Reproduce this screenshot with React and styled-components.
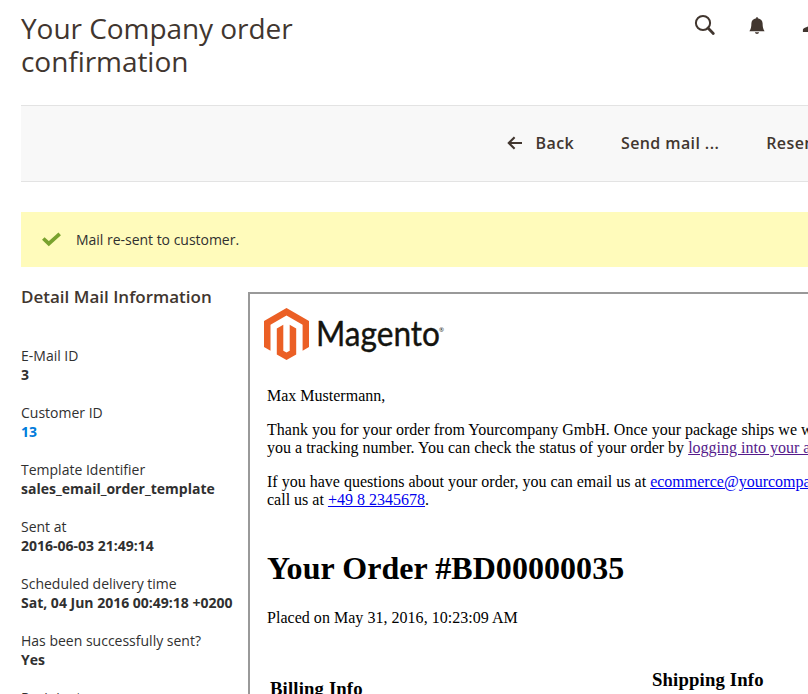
import React from "react";
import styled, { createGlobalStyle } from "styled-components";

const GlobalStyle = createGlobalStyle`
  html, body { margin: 0; background: #fff; }
  body { overflow: hidden; }
  * { box-sizing: border-box; }
`;

const Page = styled.div`
  width: 808px;
  height: 694px;
  overflow: hidden;
  padding-left: 21px;
  display: flex;
  flex-direction: column;
  color: #303030;
  font: 400 14px/19px "Open Sans", "Noto Sans", sans-serif;
  white-space: nowrap;
`;

const Header = styled.header`
  flex: none;
  height: 105px;
  display: flex;
  justify-content: space-between;
  color: #41362f;
`;

const Title = styled.h1`
  margin: 0;
  padding-top: 12px;
  width: 300px;
  font-size: 28px;
  font-weight: 400;
  line-height: 33px;
  letter-spacing: -0.05px;
`;

const HeaderIcons = styled.div`
  flex: none;
  width: 115px;
  padding-top: 14px;
  display: flex;
  gap: 30px;
  svg { flex: none; display: block; }
`;

const Toolbar = styled.div`
  flex: none;
  height: 77px;
  display: flex;
  align-items: center;
  padding: 0 0 2px 486px;
  background: #f8f8f8;
  border-top: 1px solid #e3e3e3;
  border-bottom: 1px solid #e3e3e3;
`;

const ToolbarButton = styled.button`
  flex: none;
  display: flex;
  align-items: center;
  gap: 12.6px;
  margin: 0 ${(p) => p.$after || 0}px 0 0;
  padding: 0;
  border: 0;
  background: none;
  color: #41362f;
  font: 600 16px/22px "Open Sans", sans-serif;
  letter-spacing: 0.4px;
`;

const Message = styled.div`
  flex: none;
  height: 55px;
  margin-top: 30px;
  padding-left: 21px;
  display: flex;
  align-items: center;
  gap: 15px;
  background: #fffbbb;
  letter-spacing: -0.02px;
`;

const Content = styled.main`
  flex: 1;
  min-height: 0;
  display: grid;
  grid-template-columns: 227px 900px;
`;

const Details = styled.aside`
  padding-top: 18px;
`;

const DetailsTitle = styled.h2`
  margin: 0 0 38px;
  color: #41362f;
  font-size: 17px;
  font-weight: 600;
  line-height: 23px;
`;

const DetailList = styled.dl`
  margin: 0;
  display: flex;
  flex-direction: column;
  gap: 19px;
`;

const Term = styled.dt`
  margin: 0;
`;

const Value = styled.dd`
  margin: 0;
  font-weight: 700;
`;

const ValueLink = styled.a`
  color: #007bdb;
`;

const MailFrame = styled.section`
  margin-top: 25px;
  height: 500px;
  border: 2px solid #999;
  padding: 13px 0 0 17px;
  color: #000;
  font: 16px/18px "Liberation Serif", serif;
`;

const LogoImage = styled.svg`
  display: block;
  margin-left: -3px;
`;

const Paragraph = styled.p`
  margin: 0 0 16px;
  letter-spacing: 0.005px;
`;

const Greeting = styled(Paragraph)`
  margin-top: 26px;
`;

const MailLink = styled.a`
  color: ${(p) => (p.$visited ? "#551a8b" : "#0000ee")};
  text-decoration: underline;
`;

const OrderTitle = styled.h1`
  margin: 41px 0 23px;
  font-size: 32px;
  line-height: 36px;
  letter-spacing: 0.05px;
`;

const OrderDate = styled(Paragraph)`
  letter-spacing: 0.03px;
`;

const Addresses = styled.div`
  display: grid;
  grid-template-columns: 382px 300px;
  padding: 26px 0 0 3px;
`;

const AddressTitle = styled.h3`
  margin: ${(p) => p.$drop || 0}px 0 0;
  font-size: 18.72px;
  line-height: 21px;
  letter-spacing: 0.15px;
`;

const details = [
  ["E-Mail ID", "3"],
  ["Customer ID", "13", true],
  ["Template Identifier", "sales_email_order_template"],
  ["Sent at", "2016-06-03 21:49:14"],
  ["Scheduled delivery time", "Sat, 04 Jun 2016 00:49:18 +0200"],
  ["Has been successfully sent?", "Yes"],
  ["Recipient", "max@example.com"],
];

const SearchIcon = () => (
  <svg width="24" height="24" viewBox="0 0 24 24" fill="none" stroke="#41362f">
    <circle cx="10" cy="9" r="7.1" strokeWidth="2" />
    <path d="M15 14 20.3 19.4" strokeWidth="2.8" strokeLinecap="round" />
  </svg>
);

const BellIcon = () => (
  <svg width="20" height="24" viewBox="0 0 20 24" fill="#41362f">
    <path d="M9.2 3.2h1.6v1c3.1.5 4.7 2.5 4.8 5.1.1 3.8.4 5.6 2 7.9H2.4c1.6-2.3 1.9-4.1 2-7.9.1-2.6 1.7-4.6 4.8-5.1zM7.9 18.3h4.2c-.3 1.2-1 1.7-2.1 1.7s-1.8-.5-2.1-1.7z" />
  </svg>
);

const UserIcon = () => (
  <svg width="24" height="24" viewBox="0 0 24 24" fill="#41362f">
    <ellipse cx="16" cy="8" rx="4.5" ry="5.5" />
    <path d="M5.9 18v-2c0-1.2.6-1.8 2-2.3l4-1.6h8l4 1.6V18z" />
  </svg>
);

const BackIcon = () => (
  <svg width="16" height="14" viewBox="0 0 16 14" fill="none" stroke="#41362f" strokeWidth="2.1">
    <path d="M15 7H2M7.6 1.3 1.8 7l5.8 5.7" />
  </svg>
);

const CheckIcon = () => (
  <svg width="19" height="15" viewBox="0 0 19 15" fill="none" stroke="#79a22e" strokeWidth="3.7">
    <path d="m1.3 6.5 5.5 5.2L17.7 1.8" />
  </svg>
);

const MagentoLogo = () => (
  <LogoImage width="190" height="54" viewBox="0 0 190 54">
    <g fill="#eb5f25">
      <path d="M22.5 1 45 14v26L38.6 43.7V17.7L22.5 8.5 6.5 17.7v26L0 40V14z" />
      <path d="m12.8 21.4 6.5-3.7v26l3.2 1.9 3.2-1.9v-26l6.5 3.7v26L22.5 53l-9.7-5.6z" />
    </g>
    <text x="52" y="38.8" fill="#14140f" stroke="#14140f" strokeWidth=".4" fontFamily="Lato" fontSize="34.5" textLength="124" lengthAdjust="spacingAndGlyphs">Magento</text>
    <text x="175" y="25" fill="#14140f" fontFamily="Open Sans" fontSize="6">®</text>
  </LogoImage>
);

export default function App() {
  return (
    <Page>
      <GlobalStyle />
      <Header>
        <Title>Your Company order<br />confirmation</Title>
        <HeaderIcons><SearchIcon /><BellIcon /><UserIcon /></HeaderIcons>
      </Header>
      <Toolbar>
        <ToolbarButton $after={46.8}><BackIcon />Back</ToolbarButton>
        <ToolbarButton $after={47}>Send mail ...</ToolbarButton>
        <ToolbarButton>Resend</ToolbarButton>
      </Toolbar>
      <Message><CheckIcon />Mail re-sent to customer.</Message>
      <Content>
        <Details>
          <DetailsTitle>Detail Mail Information</DetailsTitle>
          <DetailList>
            {details.map(([label, value, link]) => (
              <div key={label}>
                <Term>{label}</Term>
                <Value>{link ? <ValueLink>{value}</ValueLink> : value}</Value>
              </div>
            ))}
          </DetailList>
        </Details>
        <MailFrame>
          <MagentoLogo />
          <Greeting>Max Mustermann,</Greeting>
          <Paragraph>
            Thank you for your order from Yourcompany GmbH. Once your package ships we will send<br />
            you a tracking number. You can check the status of your order by <MailLink $visited>logging into your account</MailLink>.
          </Paragraph>
          <Paragraph>
            If you have questions about your order, you can email us at <MailLink>ecommerce@yourcompany.com</MailLink> or<br />
            call us at <MailLink>+49 8 2345678</MailLink>.
          </Paragraph>
          <OrderTitle>Your Order #BD00000035</OrderTitle>
          <OrderDate>Placed on May 31, 2016, 10:23:09 AM</OrderDate>
          <Addresses>
            <AddressTitle $drop={9}>Billing Info</AddressTitle>
            <AddressTitle>Shipping Info</AddressTitle>
          </Addresses>
        </MailFrame>
      </Content>
    </Page>
  );
}
